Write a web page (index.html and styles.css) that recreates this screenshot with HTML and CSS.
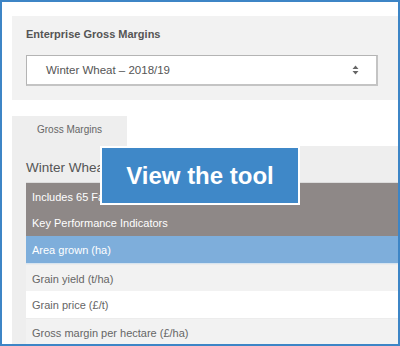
FILE: index.html
```html
<!DOCTYPE html>
<html>
<head>
<meta charset="utf-8">
<link rel="stylesheet" href="styles.css">
</head>
<body>
<div class="frame">
  <section class="picker">
    <h2 class="picker-title">Enterprise Gross Margins</h2>
    <div class="select">
      <span class="select-value">Winter Wheat – 2018/19</span>
      <svg class="select-arrows" width="7" height="10" viewBox="0 0 7 10"><path d="M3.5 0.5 L6.5 4 L0.5 4 Z M0.5 6 L6.5 6 L3.5 9.5 Z" fill="#666"/></svg>
    </div>
  </section>
  <div class="tabs">
    <div class="tab">Gross Margins</div>
  </div>
  <section class="content">
    <h3 class="crop">Winter Wheat</h3>
    <div class="table">
      <div class="row row-dark row-first">Includes 65 Farms</div>
      <div class="row row-dark">Key Performance Indicators</div>
      <div class="row row-blue">Area grown (ha)</div>
      <div class="row row-grey">Grain yield (t/ha)</div>
      <div class="row row-white">Grain price (£/t)</div>
      <div class="row row-grey">Gross margin per hectare (£/ha)</div>
    </div>
  </section>
  <a class="cta" href="#">View the tool</a>
</div>
</body>
</html>
```

FILE: styles.css
```css
html, body {
  margin: 0;
  padding: 0;
  background: #fff;
}
.frame {
  position: relative;
  width: 400px;
  height: 346px;
  box-sizing: border-box;
  border: 2px solid #3d85c6;
  padding: 14px 0 0 10px;
  overflow: hidden;
  font-family: "Liberation Sans", Arial, Helvetica, sans-serif;
  color: #555;
}
.picker {
  background: #f2f2f2;
  padding: 11px 20px 14px 14px;
}
.picker-title {
  margin: 0 0 13px 0;
  font-size: 11px;
  line-height: 15px;
  font-weight: bold;
  color: #555;
}
.select {
  display: flex;
  align-items: center;
  justify-content: space-between;
  height: 31px;
  box-sizing: border-box;
  background: #fff;
  border: 1px solid #b4b4b4;
  border-bottom-width: 2px;
  border-right-width: 2px;
  border-bottom-color: #c4c4c4;
  border-right-color: #c4c4c4;
  padding: 0 17px 0 19px;
}
.select-value {
  font-size: 11.5px;
  color: #555;
}
.select-arrows {
  display: block;
}
.tabs {
  display: flex;
  margin-top: 16px;
}
.tab {
  width: 115px;
  height: 30px;
  box-sizing: border-box;
  background: #eeeeee;
  font-size: 10px;
  color: #666;
  text-align: center;
  padding-top: 8px;
  line-height: 12px;
}
.content {
  background: #eeeeee;
  padding: 0 0 0 14px;
  height: 200px;
}
.crop {
  margin: 0;
  padding-top: 14px;
  font-size: 13.5px;
  line-height: 16px;
  font-weight: normal;
  color: #555;
  height: 22px;
}
.table {
  display: flex;
  flex-direction: column;
}
.row {
  height: 27px;
  box-sizing: border-box;
  line-height: 26px;
  padding: 1px 6px 0 6px;
  font-size: 11px;
  white-space: nowrap;
  overflow: hidden;
}
.row-first {
  border-top: 1px solid #dcdcdc;
  height: 27px;
}
.row-dark {
  background: #8e8887;
  color: #fff;
}
.row-blue {
  background: #7eaedb;
  color: #fff;
  border-bottom: 1px solid #d6e4f0;
  height: 28px;
}
.row-grey {
  background: #f2f2f2;
  color: #666;
  border-top: 1px solid #ececec;
}
.row-white {
  background: #fff;
  color: #666;
}
.cta {
  position: absolute;
  left: 98px;
  top: 144px;
  width: 200px;
  height: 59px;
  box-sizing: border-box;
  border: 2px solid #fff;
  background: #3f88c8;
  color: #fff;
  text-decoration: none;
  font-size: 24px;
  font-weight: bold;
  display: flex;
  align-items: center;
  justify-content: center;
}
```
